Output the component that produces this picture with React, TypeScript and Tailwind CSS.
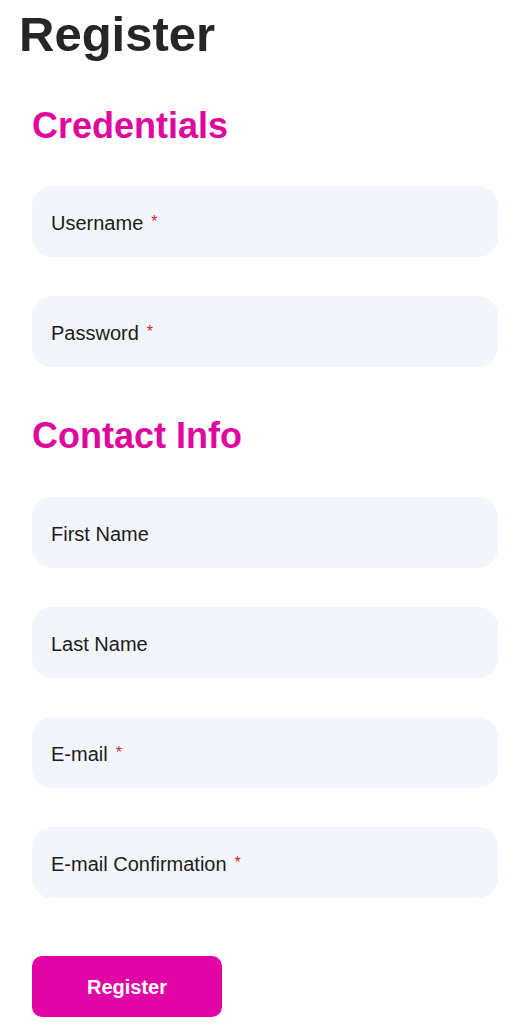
import React from 'react';

type Field = {
    label: string;
    required?: boolean;
};

const credentials: Field[] = [
    { label: 'Username', required: true },
    { label: 'Password', required: true },
];

const contact: Field[] = [
    { label: 'First Name' },
    { label: 'Last Name' },
    { label: 'E-mail', required: true },
    { label: 'E-mail Confirmation', required: true },
];

function FieldBox({ field }: { field: Field }) {
    return (
        <label className="flex h-[71px] items-center rounded-[20px] bg-[#f3f5fc] pl-[19px] pt-[2px] text-[20px] text-[#1c1c1c]">
            <span>{field.label}</span>
            {field.required && (
                <span className="ml-[8px] -mt-[2px] text-[16px] text-[#cf2a2a]">*</span>
            )}
        </label>
    );
}

export default function App() {
    return (
        <div className="min-h-screen bg-white font-['Liberation_Sans',Arial,sans-serif]">
            <h1 className="pt-[10px] pl-[19px] text-[49px] font-bold leading-[48px] text-[#262626]">
                Register
            </h1>

            <form className="mt-12 px-8" onSubmit={(e) => e.preventDefault()}>
                <h2 className="text-[36px] font-bold leading-10 text-[#e0079f]">Credentials</h2>
                <div className="mt-10 flex flex-col gap-[39px]">
                    {credentials.map((f) => (
                        <FieldBox key={f.label} field={f} />
                    ))}
                </div>

                <h2 className="mt-[49px] text-[36px] font-bold leading-10 text-[#e0079f]">Contact Info</h2>
                <div className="mt-[41px] flex flex-col gap-[39px]">
                    {contact.map((f) => (
                        <FieldBox key={f.label} field={f} />
                    ))}
                </div>

                <button
                    type="submit"
                    className="mt-[58px] h-[61px] w-[190px] rounded-[10px] bg-[#e205a5] text-[20px] font-bold text-white"
                >
                    Register
                </button>
            </form>
        </div>
    );
}
